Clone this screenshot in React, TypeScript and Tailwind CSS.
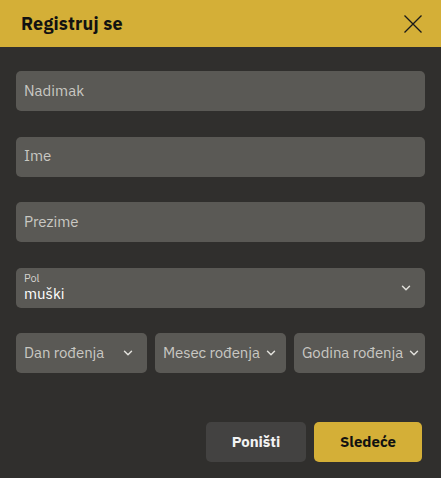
import { ChevronDown } from "lucide-react";

const font = { fontFamily: '"IBM Plex Sans", "Noto Sans", Inter, sans-serif' };

const TextField = ({ label }: { label: string }) => (
  <div className="h-10 rounded-[5px] bg-[#5a5955] flex items-center px-2">
    <span className="text-[15px] text-[#c9c8c3]">{label}</span>
  </div>
);

const DateSelect = ({ label }: { label: string }) => (
  <div className="h-10 rounded-[5px] bg-[#5a5955] flex items-center justify-between gap-1 pl-2 pr-3 overflow-hidden">
    <span className="text-[15px] text-[#c9c8c3] whitespace-nowrap tracking-[-0.1px]">{label}</span>
    <ChevronDown className="w-[14px] h-[14px] text-[#e0dfda] shrink-0" strokeWidth={2.5} />
  </div>
);

export default function App() {
  return (
    <div className="w-[441px] h-[478px] bg-[#302f2d] flex flex-col" style={font}>
      <div className="h-[47px] bg-[#d4af37] flex items-center justify-between pl-[21px] pr-[19px]">
        <h2 className="text-[18px] font-bold text-[#111111] tracking-[0.2px]">Registruj se</h2>
        <svg width="18" height="18" viewBox="0 0 18 18" className="text-[#1a1a1a]">
          <path d="M0.5 0.5 L17.5 17.5 M17.5 0.5 L0.5 17.5" stroke="currentColor" strokeWidth="1.3" />
        </svg>
      </div>

      <div className="flex flex-col px-4 pt-6 gap-[25.5px]">
        <TextField label="Nadimak" />
        <TextField label="Ime" />
        <TextField label="Prezime" />
        <div className="h-10 rounded-[5px] bg-[#5a5955] flex items-center justify-between pl-2 pr-3">
          <div className="flex flex-col leading-none">
            <span className="text-[11px] text-[#d4d3ce] leading-[13px]">Pol</span>
            <span className="text-[15px] text-white leading-[18px]">muški</span>
          </div>
          <ChevronDown className="w-[14px] h-[14px] text-[#e0dfda]" strokeWidth={2.5} />
        </div>
        <div className="grid grid-cols-3 gap-[8px]">
          <DateSelect label="Dan rođenja" />
          <DateSelect label="Mesec rođenja" />
          <DateSelect label="Godina rođenja" />
        </div>
      </div>

      <div className="flex justify-end gap-2 px-[19px] mt-auto mb-4">
        <button className="h-10 w-[100px] rounded-[5px] bg-[#434241] text-[15px] font-bold text-[#f2f2f2]">
          Poništi
        </button>
        <button className="h-10 w-[108px] rounded-[5px] bg-[#d4af37] text-[15px] font-bold text-[#111111]">
          Sledeće
        </button>
      </div>
    </div>
  );
}
